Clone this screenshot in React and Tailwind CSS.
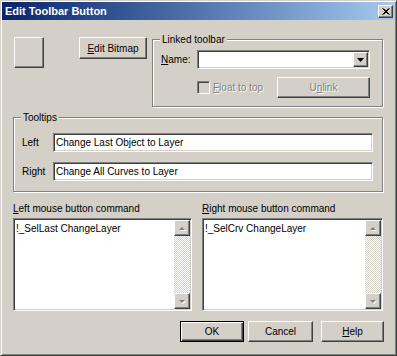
import React from 'react';

const raised = 'border border-t-white border-l-white border-r-[#404040] border-b-[#404040] shadow-[inset_-1px_-1px_#808080]';
const sunken = 'border border-t-[#808080] border-l-[#808080] border-r-white border-b-white shadow-[inset_1px_1px_#404040,inset_-1px_-1px_#d4d0c8]';
const etched = 'border border-[#808080] shadow-[inset_1px_1px_#fff,1px_1px_#fff]';

function Button({ children, className = '', isDefault = false }) {
  const frame = isDefault
    ? 'border border-black shadow-[inset_1px_1px_#fff,inset_-1px_-1px_#404040,inset_-2px_-2px_#808080]'
    : raised;
  return (
    <div className={`${frame} bg-[#d4d0c8] flex items-center justify-center h-[21px] ${className}`}>
      {children}
    </div>
  );
}

function Arrow({ up, color = '#808080' }) {
  return (
    <svg width="7" height="5" viewBox="0 0 7 5">
      {up ? (
        <>
          <path d="M1 5h6L4 2z" fill="#fff" />
          <path d="M0 4h6L3 1z" fill={color} />
        </>
      ) : (
        <>
          <path d="M1 2h6L4 5z" fill="#fff" />
          <path d="M0 1h6L3 4z" fill={color} />
        </>
      )}
    </svg>
  );
}

function Scrollbar() {
  return (
    <div className="flex flex-col w-[16px] h-full">
      <div className={`${raised} bg-[#d4d0c8] h-[16px] flex items-center justify-center`}>
        <Arrow up />
      </div>
      <div className="flex-1 bg-[repeating-conic-gradient(#d4d0c8_0_25%,#ffffff_0_50%)] bg-[length:2px_2px]" />
      <div className={`${raised} bg-[#d4d0c8] h-[16px] flex items-center justify-center`}>
        <Arrow />
      </div>
    </div>
  );
}

function CommandBox({ label, hotkey, text, width }) {
  return (
    <div className="flex flex-col" style={{ width }}>
      <div className="leading-[13px] h-[13px]">
        <span className="underline">{hotkey}</span>
        {label}
      </div>
      <div className={`${sunken} mt-[3px] h-[93px] bg-white p-px flex`}>
        <div className="flex-1 pl-[1px] pt-[2px] leading-[13px]">{text}</div>
        <Scrollbar />
      </div>
    </div>
  );
}

export default function App() {
  return (
    <div
      className="w-[397px] h-[356px] bg-[#d4d0c8] border border-[#d4d0c8] border-r-[#404040] border-b-[#404040] shadow-[inset_1px_1px_#fff,inset_-1px_-1px_#808080] p-px text-[10px] text-black"
      style={{ fontFamily: '"Liberation Sans", Arial, sans-serif' }}
    >
      {/* title bar */}
      <div className="h-[18px] flex items-center pl-[3px] pr-[2px] bg-gradient-to-r from-[#0a246a] to-[#a6caf0]">
        <span className="text-white font-bold text-[11px] leading-none">Edit Toolbar Button</span>
        <div className={`${raised} bg-[#d4d0c8] ml-auto w-[15px] h-[13px] flex items-center justify-center`}>
          <svg width="8" height="7" viewBox="0 0 8 7">
            <path d="M0.5 0.5l6 6M1.5 0.5l6 6M6.5 0.5l-6 6M7.5 0.5l-6 6" stroke="#000" strokeWidth="1" />
          </svg>
        </div>
      </div>

      <div className="flex flex-col pl-[11px] pt-[17px]">
        {/* top row */}
        <div className="flex items-start">
          <div className={`${raised} ml-px w-[30px] h-[31px] bg-[#d4d0c8]`} />
          <Button className="ml-[35px] w-[68px] h-[22px]">
            <span>
              <span className="underline">E</span>dit Bitmap
            </span>
          </Button>

          <div className={`${etched} relative ml-[5px] mt-[2px] w-[231px] h-[68px] pl-[8px] pt-[10px]`}>
            <span className="absolute -top-[7px] left-[7px] px-[2px] bg-[#d4d0c8] leading-[13px]">Linked toolbar</span>
            <div className="flex items-center">
              <span className="w-[36px]">
                <span className="underline">N</span>ame:
              </span>
              <div className={`${sunken} w-[173px] h-[19px] bg-white p-px flex justify-end`}>
                <div className={`${raised} bg-[#d4d0c8] w-[15px] h-full flex items-center justify-center`}>
                  <svg width="7" height="4" viewBox="0 0 7 4">
                    <path d="M0 0h7L3.5 4z" fill="#000" />
                  </svg>
                </div>
              </div>
            </div>
            <div className="flex items-center mt-[8px]">
              <div className={`${sunken} ml-[36px] w-[13px] h-[13px] bg-[#d4d0c8]`} />
              <span className="ml-[3px] text-[#808080] [text-shadow:1px_1px_#fff]">
                <span className="underline">F</span>loat to top
              </span>
              <Button className="ml-auto mr-[12px] w-[93px] text-[#808080] [text-shadow:1px_1px_#fff]">
                <span>
                  U<span className="underline">n</span>link
                </span>
              </Button>
            </div>
          </div>
        </div>

        {/* tooltips */}
        <div className={`${etched} relative mt-[10px] w-[370px] h-[75px] pl-[8px] pt-[15px]`}>
          <span className="absolute -top-[7px] left-[7px] px-[2px] bg-[#d4d0c8] leading-[13px]">Tooltips</span>
          <div className="flex items-center">
            <span className="w-[31px]">Left</span>
            <div className={`${sunken} w-[320px] h-[19px] bg-white pl-[2px] flex items-center`}>Change Last Object to Layer</div>
          </div>
          <div className="flex items-center mt-[10px]">
            <span className="w-[31px]">Right</span>
            <div className={`${sunken} w-[320px] h-[19px] bg-white pl-[2px] flex items-center`}>Change All Curves to Layer</div>
          </div>
        </div>

        {/* commands */}
        <div className="flex mt-[10px] gap-[10px]">
          <CommandBox width={179} hotkey="L" label="eft mouse button command" text="!_SelLast ChangeLayer" />
          <CommandBox width={181} hotkey="R" label="ight mouse button command" text="!_SelCrv ChangeLayer" />
        </div>

        {/* buttons */}
        <div className="flex mt-[10px]">
          <Button isDefault className="ml-[167px] w-[64px]">OK</Button>
          <Button className="ml-[4px] w-[65px]">Cancel</Button>
          <Button className="ml-[8px] w-[63px]">
            <span>
              <span className="underline">H</span>elp
            </span>
          </Button>
        </div>
      </div>
    </div>
  );
}
